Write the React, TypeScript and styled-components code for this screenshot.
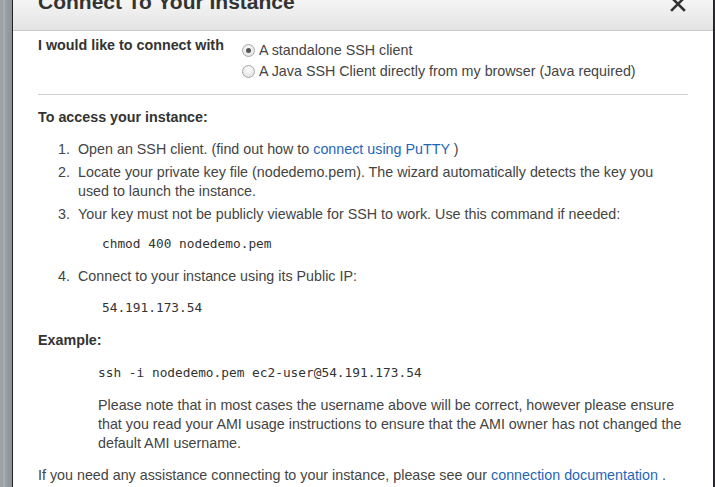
import React from 'react';
import styled, { createGlobalStyle } from 'styled-components';

const GlobalStyle = createGlobalStyle`
  html, body {
    margin: 0;
    padding: 0;
    height: 100%;
    overflow: hidden;
  }
  body {
    background: #2e2a36;
    font-family: "Liberation Sans", Arial, sans-serif;
  }
`;

const Page = styled.div`
  display: flex;
  height: 487px;
`;

const Backdrop = styled.div`
  width: 12px;
  flex: none;
  background: linear-gradient(to right, #9ca1a6 0, #9ca1a6 3px, #a8adb2 3px, #a8adb2 5px, #9ca1a6 5px, #8f9499 11px);
`;

const Dialog = styled.div`
  width: 700px;
  flex: none;
  background: #fff;
  border-left: 1px solid #222;
  border-right: 1px solid #222;
  display: flex;
  flex-direction: column;
`;

const Header = styled.header`
  height: 30px;
  flex: none;
  display: flex;
  justify-content: space-between;
  align-items: flex-start;
  padding: 0 25px;
  background: linear-gradient(to bottom, #f5f5f5, #e3e3e3);
  border-bottom: 1px solid #c9c9c9;
  overflow: hidden;
`;

const Title = styled.h1`
  margin: -8px 0 0;
  font-size: 21px;
  line-height: 20px;
  font-weight: bold;
  color: #333;
`;

const Close = styled.button`
  margin: -4px 2px 0 0;
  padding: 0;
  border: none;
  background: none;
  width: 16px;
  height: 16px;
  display: flex;
`;

const Body = styled.div`
  padding: 5px 25px 0;
  color: #444;
  font-size: 14.3px;
  line-height: 19px;
`;

const ChoiceRow = styled.div`
  display: grid;
  grid-template-columns: 204px 1fr;
`;

const Label = styled.div`
  font-weight: bold;
  color: #333;
`;

const Options = styled.div`
  margin-top: 4px;
  display: flex;
  flex-direction: column;
`;

const Option = styled.label`
  display: flex;
  align-items: center;
  line-height: 21px;
`;

const Radio = styled.span<{ $checked?: boolean }>`
  width: 11px;
  height: 11px;
  border-radius: 50%;
  border: 1px solid #a8a8a8;
  background: radial-gradient(circle at 50% 35%, #fdfdfd, #dcdcdc);
  margin-right: 4px;
  display: flex;
  align-items: center;
  justify-content: center;
  &::after {
    content: '';
    width: 5px;
    height: 5px;
    border-radius: 50%;
    background: ${(p) => (p.$checked ? '#555' : 'transparent')};
  }
`;

const Rule = styled.hr`
  margin: 12px 0 0;
  border: none;
  border-top: 1px solid #d0d0d0;
`;

const Heading = styled.h2<{ $top: number }>`
  margin: ${(p) => p.$top}px 0 0;
  font-size: 14.3px;
  line-height: 19px;
  font-weight: bold;
  color: #333;
`;

const Steps = styled.ol`
  list-style: none;
  margin: 13px 0 0;
  padding: 0 0 0 20px;
`;

const Step = styled.li<{ $top?: number }>`
  display: flex;
  margin-top: ${(p) => p.$top ?? 4}px;
`;

const Num = styled.span`
  width: 20px;
  flex: none;
`;

const StepText = styled.div`
  flex: 1;
`;

const Code = styled.div<{ $top: number; $indent: number }>`
  margin: ${(p) => p.$top}px 0 0 ${(p) => p.$indent}px;
  font-family: "DejaVu Sans Mono", "Liberation Mono", monospace;
  font-size: 12.8px;
  line-height: 19px;
  color: #333;
`;

const Note = styled.p`
  margin: 14px 0 0 60px;
`;

const Footer = styled.p`
  margin: 13px 0 0;
`;

const Link = styled.a`
  color: #1f66b8;
  text-decoration: none;
`;

const App: React.FC = () => {
  return (
    <>
      <GlobalStyle />
      <Page>
        <Backdrop />
        <Dialog>
          <Header>
            <Title>Connect To Your Instance</Title>
            <Close aria-label="Close">
              <svg width="16" height="16" viewBox="0 0 16 16">
                <path d="M2 2 L14 14 M14 2 L2 14" stroke="#333" strokeWidth="2.6" strokeLinecap="square" />
              </svg>
            </Close>
          </Header>
          <Body>
            <ChoiceRow>
              <Label>I would like to connect with</Label>
              <Options>
                <Option>
                  <Radio $checked />A standalone SSH client
                </Option>
                <Option>
                  <Radio />A Java SSH Client directly from my browser (Java required)
                </Option>
              </Options>
            </ChoiceRow>
            <Rule />

            <Heading $top={13}>To access your instance:</Heading>
            <Steps>
              <Step $top={0}>
                <Num>1.</Num>
                <StepText>
                  Open an SSH client. (find out how to <Link href="#">connect using PuTTY</Link> )
                </StepText>
              </Step>
              <Step>
                <Num>2.</Num>
                <StepText>
                  Locate your private key file (nodedemo.pem). The wizard automatically detects the key you
                  used to launch the instance.
                </StepText>
              </Step>
              <Step>
                <Num>3.</Num>
                <StepText>
                  Your key must not be publicly viewable for SSH to work. Use this command if needed:
                  <Code $top={10} $indent={24}>chmod 400 nodedemo.pem</Code>
                </StepText>
              </Step>
              <Step $top={14}>
                <Num>4.</Num>
                <StepText>
                  Connect to your instance using its Public IP:
                  <Code $top={12} $indent={24}>54.191.173.54</Code>
                </StepText>
              </Step>
            </Steps>

            <Heading $top={14}>Example:</Heading>
            <Code $top={13} $indent={60}>ssh -i nodedemo.pem ec2-user@54.191.173.54</Code>
            <Note>
              Please note that in most cases the username above will be correct, however please ensure
              that you read your AMI usage instructions to ensure that the AMI owner has not changed the
              default AMI username.
            </Note>
            <Footer>
              If you need any assistance connecting to your instance, please see our{' '}
              <Link href="#">connection documentation</Link> .
            </Footer>
          </Body>
        </Dialog>
      </Page>
    </>
  );
};

export default App;
